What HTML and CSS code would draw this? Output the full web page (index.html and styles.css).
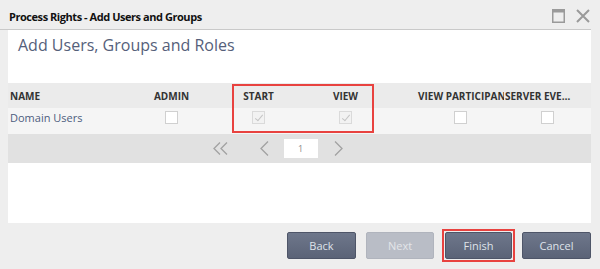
FILE: index.html
```html
<!DOCTYPE html>
<html lang="en">
  <head>
    <meta charset="UTF-8" />
    <title>Process Rights - Add Users and Groups</title>
    <link rel="stylesheet" href="styles.css">
  </head>
  <body>
    <div class="titlebar">
      <div class="title">Process Rights - Add Users and Groups</div>
      <div class="window-icons">
        <svg width="13" height="14" viewBox="0 0 13 14">
          <rect x="0.75" y="0.75" width="11.5" height="12.5" fill="none" stroke="#9a9a9a" stroke-width="1.5" />
          <rect x="0" y="0" width="13" height="3.5" fill="#9a9a9a" />
        </svg>
        <svg width="14" height="14" viewBox="0 0 14 14">
          <path d="M1 1 L13 13 M13 1 L1 13" stroke="#9a9a9a" stroke-width="2" fill="none" />
        </svg>
      </div>
    </div>

    <div class="panel">
      <h1>Add Users, Groups and Roles</h1>

      <div class="grid-wrap">
        <div class="grid-row head">
          <div class="cell name">NAME</div>
          <div class="cell">ADMIN</div>
          <div class="cell">START</div>
          <div class="cell">VIEW</div>
          <div class="cell overflow">VIEW PARTICIPANTS</div>
          <div class="cell clip">SERVER EVENTS</div>
        </div>
        <div class="grid-row data">
          <div class="cell name user">Domain Users</div>
          <div class="cell box"><span class="check"></span></div>
          <div class="cell box"><span class="check checked"></span></div>
          <div class="cell box"><span class="check checked"></span></div>
          <div class="cell box shifted"><span class="check"></span></div>
          <div class="cell box"><span class="check"></span></div>
        </div>
        <div class="pager">
          <svg class="arrow" width="15" height="13" viewBox="0 0 15 13">
            <path d="M7 0.5 L1 6.5 L7 12.5 M14 0.5 L8 6.5 L14 12.5" />
          </svg>
          <svg class="arrow" width="9" height="15" viewBox="0 0 9 15">
            <path d="M8 0.5 L1 7.5 L8 14.5" />
          </svg>
          <div class="page-box">1</div>
          <svg class="arrow" width="9" height="15" viewBox="0 0 9 15">
            <path d="M1 0.5 L8 7.5 L1 14.5" />
          </svg>
          <svg class="arrow hidden" width="15" height="13" viewBox="0 0 15 13">
            <path d="M1 0.5 L7 6.5 L1 12.5 M8 0.5 L14 6.5 L8 12.5" />
          </svg>
        </div>
        <div class="mark"></div>
      </div>
    </div>

    <div class="footer">
      <button class="btn">Back</button>
      <button class="btn disabled">Next</button>
      <span class="mark-btn"><button class="btn">Finish</button></span>
      <button class="btn">Cancel</button>
    </div>
  </body>
</html>
```

FILE: styles.css
```css
body {
  margin: 0;
  background-color: #eeeeee;
  font-family: "Open Sans", "Liberation Sans", sans-serif;
  color: #222;
}

.titlebar {
  display: flex;
  justify-content: space-between;
  align-items: center;
  height: 29px;
  padding: 0 1px 0 9px;
  margin-right: 9px;
  border-bottom: 1px solid #c9c9c9;
}

.title {
  font-size: 11px;
  font-weight: bold;
  color: #111;
  padding-top: 3px;
  letter-spacing: -0.45px;
}

.window-icons {
  display: flex;
  gap: 11px;
  align-items: center;
  padding-top: 2px;
}

.panel {
  background-color: #ffffff;
  margin: 0 9px 0 8px;
  height: 193px;
}

.panel h1 {
  margin: 0;
  height: 53px;
  box-sizing: border-box;
  padding: 4px 10px 0;
  font-size: 16px;
  font-weight: normal;
  color: #55607a;
}

.grid-wrap {
  position: relative;
}

.grid-row {
  display: grid;
  grid-template-columns: 120px 87px 87px 87px 115px 1fr;
  align-items: center;
}

.grid-row.head {
  height: 25px;
  background-color: #ebebeb;
  font-size: 10px;
  font-weight: bold;
  color: #333;
}

.grid-row.data {
  height: 26px;
  box-sizing: border-box;
  padding-bottom: 8px;
  background-color: #f5f5f5;
}

.cell {
  text-align: center;
  white-space: nowrap;
}

.cell.name {
  text-align: left;
  padding-left: 2px;
}

.cell.user {
  font-size: 11px;
  color: #4d5d7e;
}

.cell.box {
  display: flex;
  justify-content: center;
  align-items: center;
}

.cell.overflow {
  text-align: left;
  padding-left: 29px;
  overflow: hidden;
}

.cell.clip {
  text-align: left;
  padding-left: 1px;
  padding-right: 19px;
  overflow: hidden;
  text-overflow: ellipsis;
}

.cell.shifted {
  padding-left: 27px;
}

.check {
  display: block;
  width: 13px;
  height: 13px;
  box-sizing: border-box;
  border: 1px solid #d0d0d0;
  background-color: #ffffff;
  position: relative;
}

.check.checked {
  background-color: #f2f2f2;
  border-color: #dadada;
}

.check.checked::after {
  content: "";
  position: absolute;
  left: 4px;
  top: 1px;
  width: 3px;
  height: 7px;
  border: solid #c4c4c4;
  border-width: 0 1.5px 1.5px 0;
  transform: rotate(40deg);
}

.pager {
  display: flex;
  justify-content: center;
  align-items: center;
  height: 29px;
  padding-left: 3px;
  background-color: #e1e1e1;
}

.arrow path {
  fill: none;
  stroke: #a2a2a2;
  stroke-width: 1.3;
}

.arrow.hidden {
  visibility: hidden;
}

.pager svg:nth-child(1) {
  margin-right: 32px;
}

.pager svg:nth-child(2) {
  margin-right: 15px;
}

.page-box {
  width: 34px;
  height: 19px;
  line-height: 19px;
  background-color: #ffffff;
  text-align: center;
  font-size: 9px;
  color: #888;
  margin-right: 16px;
}

.pager svg:nth-child(4) {
  margin-right: 32px;
}

.mark {
  position: absolute;
  left: 224px;
  top: 1px;
  width: 138px;
  height: 45px;
  border: 2px solid #e8423f;
}

.footer {
  display: flex;
  justify-content: flex-end;
  align-items: center;
  padding: 6px 9px 0 0;
}

.btn {
  width: 69px;
  height: 27px;
  margin-left: 10px;
  border: 1px solid #4e5568;
  border-radius: 2px;
  background: linear-gradient(#6e778b, #5b6377);
  color: #dfe3ea;
  font-family: "Open Sans", "Liberation Sans", sans-serif;
  font-size: 11px;
  cursor: pointer;
}

.btn.disabled {
  width: 68px;
  background: #b9bdc6;
  border-color: #b0b4bd;
  color: #e3e5e9;
}

.mark-btn {
  display: inline-flex;
  margin-left: 8px;
  padding: 1px;
  border: 2px solid #e8423f;
}

.mark-btn .btn {
  width: 67px;
  margin-left: 0;
}

.mark-btn + .btn {
  margin-left: 7px;
}
```
